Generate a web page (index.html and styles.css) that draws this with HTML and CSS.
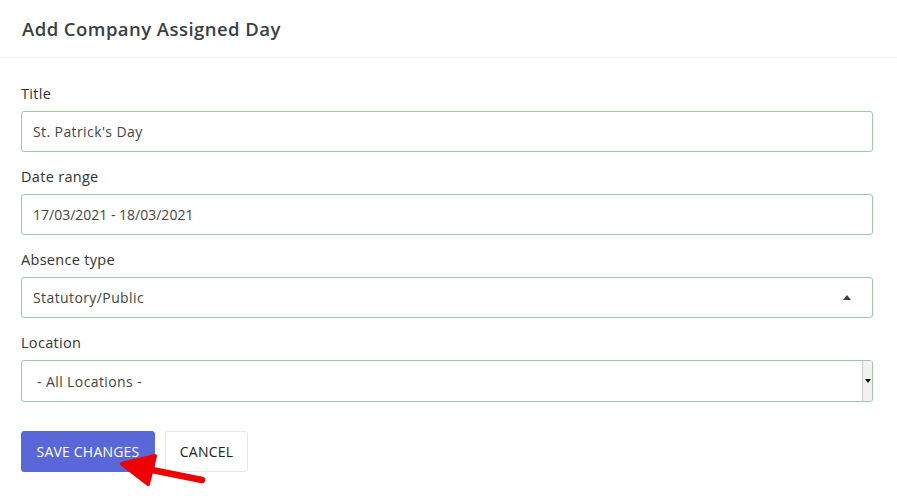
FILE: index.html
```html
<!DOCTYPE html>
<html>
<head>
<meta charset="utf-8">
<link rel="stylesheet" href="styles.css">
</head>
<body>
<div class="modal">
  <div class="modal-header">
    <h2 class="modal-title">Add Company Assigned Day</h2>
  </div>
  <form class="modal-body">
    <div class="field">
      <label class="field-label">Title</label>
      <div class="control">St. Patrick's Day</div>
    </div>
    <div class="field">
      <label class="field-label">Date range</label>
      <div class="control control-date">17/03/2021 - 18/03/2021</div>
    </div>
    <div class="field">
      <label class="field-label">Absence type</label>
      <div class="control control-select">
        <span>Statutory/Public</span>
        <span class="caret-up"></span>
      </div>
    </div>
    <div class="field">
      <label class="field-label">Location</label>
      <div class="control control-native">
        <span>- All Locations -</span>
        <span class="native-arrow"><span class="caret-down"></span></span>
      </div>
    </div>
    <div class="actions">
      <button type="button" class="btn btn-primary">SAVE CHANGES</button>
      <button type="button" class="btn btn-default">CANCEL</button>
      <svg class="pointer" width="110" height="50" viewBox="0 0 110 50">
        <line x1="92" y1="41" x2="32" y2="29" stroke="#ee0000" stroke-width="6.5" stroke-linecap="round"/>
        <polygon points="12,25 45,17 38,45" fill="#ee0000" stroke="#ee0000" stroke-width="4" stroke-linejoin="round"/>
      </svg>
    </div>
  </form>
</div>
</body>
</html>
```
FILE: styles.css
```css
* { box-sizing: border-box; }
html, body { margin: 0; padding: 0; background: #fff; }
body {
  font-family: "Open Sans", "Liberation Sans", sans-serif;
  color: #333;
  width: 897px;
  height: 496px;
  overflow: hidden;
}
.modal { width: 897px; }
.modal-header {
  height: 58px;
  border-bottom: 1px solid #eeeeee;
  padding: 0 22px;
  display: flex;
  align-items: center;
}
.modal-title {
  margin: 0;
  font-size: 18.5px;
  font-weight: 600;
  color: #3a3f46;
  letter-spacing: 0.45px;
}
.modal-body {
  padding: 27px 24px 0 21px;
  display: flex;
  flex-direction: column;
  position: relative;
}
.field { display: flex; flex-direction: column; margin-bottom: 16px; }
.field-label {
  font-size: 14.5px;
  letter-spacing: 0.3px;
  color: #333;
  height: 18px;
  line-height: 18px;
  margin-bottom: 8px;
}
.control {
  height: 41px;
  border: 1px solid #a0c8aa;
  border-radius: 3px;
  padding: 0 11px;
  display: flex;
  align-items: center;
  font-size: 14px;
  letter-spacing: 0.4px;
  color: #444;
}
.control-date { letter-spacing: 0; }
.control-select { justify-content: space-between; padding-right: 21px; }
.caret-up {
  width: 0; height: 0;
  border-left: 4px solid transparent;
  border-right: 4px solid transparent;
  border-bottom: 5px solid #3b4048;
}
.control-native { justify-content: space-between; padding-left: 15px; padding-right: 0; height: 42px; }
.native-arrow {
  width: 10px;
  align-self: stretch;
  border-left: 1px solid #ccc;
  background: #f1f1f1;
  display: flex;
  align-items: center;
  justify-content: center;
  border-radius: 0 2px 2px 0;
}
.caret-down {
  width: 0; height: 0;
  border-left: 3px solid transparent;
  border-right: 3px solid transparent;
  border-top: 4px solid #111;
}
.actions {
  display: flex;
  gap: 10px;
  margin-top: 13px;
  position: relative;
}
.btn {
  height: 41px;
  font-family: inherit;
  font-size: 14px;
  letter-spacing: 0.2px;
  border-radius: 3px;
  padding: 0 10px;
  cursor: pointer;
}
.btn-primary {
  background: #5a67d8;
  border: 1px solid #5a67d8;
  color: #fff;
  width: 134px;
}
.btn-default {
  background: #fff;
  border: 1px solid #e5e7eb;
  color: #222;
  width: 83px;
}
.pointer {
  position: absolute;
  left: 89px;
  top: 8px;
}
```
